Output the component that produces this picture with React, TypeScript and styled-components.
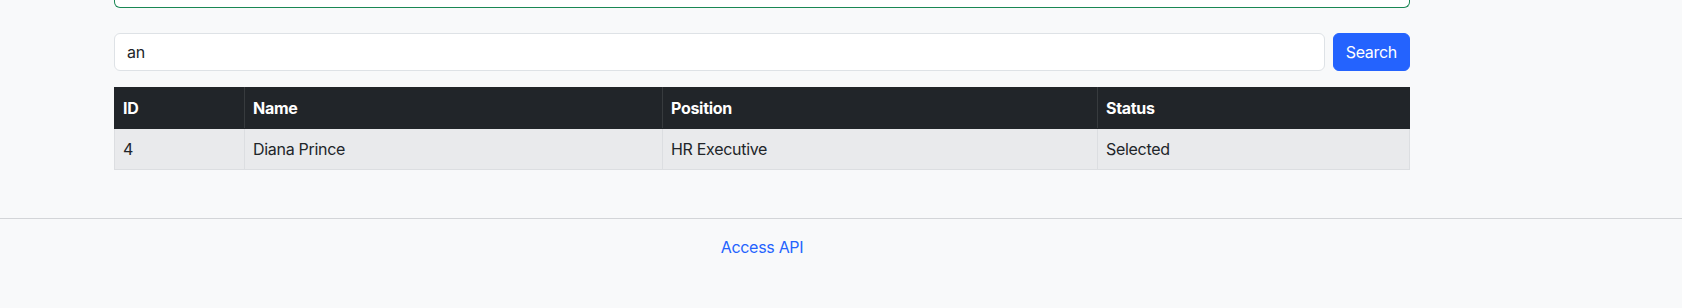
import styled, { createGlobalStyle } from 'styled-components';

const GlobalStyle = createGlobalStyle`
  html, body {
    margin: 0;
    padding: 0;
    background: #f8f9fa;
  }
  body {
    font-family: Inter, "Noto Sans", "Liberation Sans", sans-serif;
    font-size: 16px;
    line-height: 24px;
    letter-spacing: -0.3px;
    color: #212529;
  }
  * {
    box-sizing: border-box;
  }
`;

const Frame = styled.div`
  width: 1524px;
`;

const Container = styled.main`
  width: 1296px;
  margin: 0 auto;
  padding-bottom: 48px;
`;

const ResultCard = styled.div`
  height: 8px;
  background: #fff;
  border: 1px solid #198754;
  border-top: none;
  border-radius: 0 0 6px 6px;
  margin-bottom: 25px;
`;

const SearchForm = styled.form`
  display: flex;
  gap: 8px;
  margin-bottom: 16px;
`;

const SearchInput = styled.input`
  flex: 1;
  height: 38px;
  padding: 6px 12px;
  font: inherit;
  letter-spacing: inherit;
  color: #212529;
  background: #fff;
  border: 1px solid #dee2e6;
  border-radius: 6px;
  outline: none;
`;

const Button = styled.button`
  height: 38px;
  padding: 6px 12px;
  font: inherit;
  letter-spacing: inherit;
  color: #fff;
  background: #2463fe;
  border: 1px solid #2463fe;
  border-radius: 6px;
  cursor: pointer;
`;

const Table = styled.table`
  width: 100%;
  border-collapse: collapse;
`;

const Th = styled.th<{ $width?: number }>`
  width: ${({ $width }) => ($width ? `${$width}px` : 'auto')};
  padding: 8px;
  text-align: left;
  font-weight: 700;
  color: #fff;
  background: #212529;
  border: 1px solid #373b3e;
  border-top-color: #212529;
  border-bottom-color: #212529;
  &:first-child {
    border-left-color: #212529;
  }
  &:last-child {
    border-right-color: #212529;
  }
`;

const Td = styled.td`
  padding: 8px;
  background: #e9eaec;
  border: 1px solid #dcdee1;
`;

const Footer = styled.footer`
  border-top: 1px solid #d3d5d8;
  padding: 16px 0 48px;
`;

const FooterInner = styled.div`
  width: 1524px;
  text-align: center;
`;

const FooterLink = styled.a`
  color: #2463fe;
  text-decoration: none;
`;

const rows = [{ id: 4, name: 'Diana Prince', position: 'HR Executive', status: 'Selected' }];

export default function App() {
  return (
    <>
      <GlobalStyle />
      <Frame>
        <Container>
          <ResultCard />
          <SearchForm onSubmit={e => e.preventDefault()}>
            <SearchInput type="text" defaultValue="an" />
            <Button type="submit">Search</Button>
          </SearchForm>
          <Table>
            <thead>
              <tr>
                <Th $width={130}>ID</Th>
                <Th $width={418}>Name</Th>
                <Th $width={435}>Position</Th>
                <Th>Status</Th>
              </tr>
            </thead>
            <tbody>
              {rows.map(row => (
                <tr key={row.id}>
                  <Td>{row.id}</Td>
                  <Td>{row.name}</Td>
                  <Td>{row.position}</Td>
                  <Td>{row.status}</Td>
                </tr>
              ))}
            </tbody>
          </Table>
        </Container>
      </Frame>
      <Footer>
        <FooterInner>
          <FooterLink href="#">Access API</FooterLink>
        </FooterInner>
      </Footer>
    </>
  );
}
